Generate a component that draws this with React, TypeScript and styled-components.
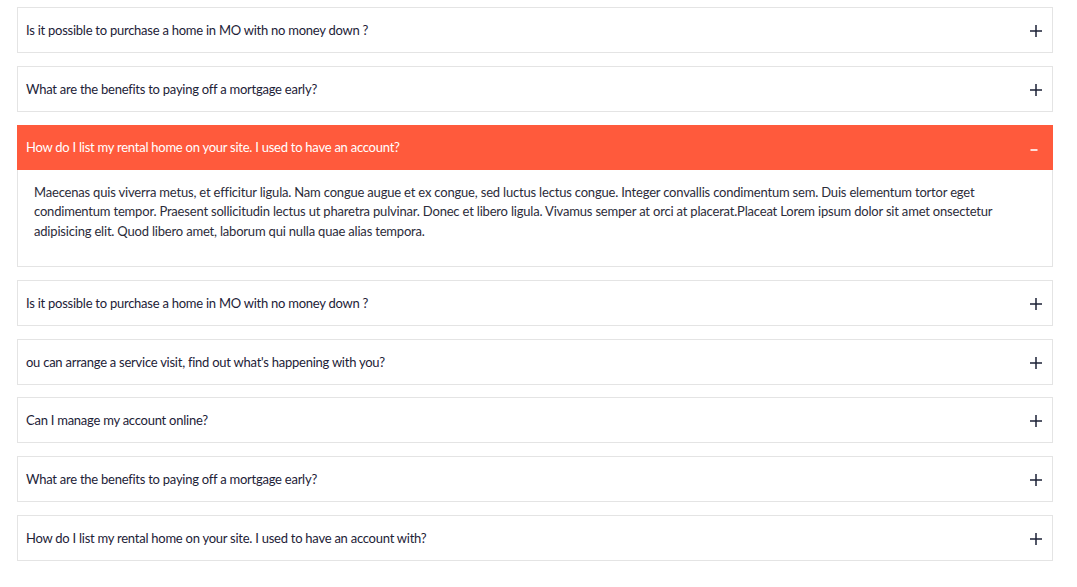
import React, { useState } from "react";
import styled, { createGlobalStyle } from "styled-components";

const Global = createGlobalStyle`
  html, body { margin: 0; padding: 0; background: #fff; }
  body { font-family: Lato, "Open Sans", sans-serif; }
`;

const Wrapper = styled.div`
  padding: 7px 24px 0 17px;
  display: flex;
  flex-direction: column;
  gap: 12.8px;
`;

const Item = styled.div`
  border: 1px solid #e4e4e4;
  background: #fff;
`;

const Header = styled.div<{ $open: boolean }>`
  height: ${(p) => (p.$open ? "45px" : "44px")};
  display: flex;
  align-items: center;
  justify-content: space-between;
  background: ${(p) => (p.$open ? "#ff5a3c" : "#fff")};
  color: ${(p) => (p.$open ? "#fff" : "#1d2237")};
  font-size: 13px;
  letter-spacing: -0.25px;
  cursor: pointer;
  margin: ${(p) => (p.$open ? "-1px -1px 0" : "0")};
  padding-left: ${(p) => (p.$open ? "9px" : "8px")};
  padding-right: ${(p) => (p.$open ? "10px" : "9px")};
`;

const Body = styled.div`
  padding: 13px 16px 25px 16px;
  font-size: 13px;
  line-height: 19.5px;
  letter-spacing: -0.19px;
  color: #2c2c3a;
`;

const IconBox = styled.span`
  display: flex;
  width: 14px;
  height: 14px;
  margin-top: 2px;
`;

const PlusIcon = () => (
  <IconBox>
    <svg width="14" height="14" viewBox="0 0 14 14">
      <path d="M7 1v12M1 7h12" stroke="#1d2237" strokeWidth="1.5" fill="none" />
    </svg>
  </IconBox>
);

const MinusIcon = () => (
  <IconBox>
    <svg width="14" height="14" viewBox="0 0 14 14">
      <path d="M1.5 9h7" stroke="#fff" strokeWidth="1.6" fill="none" />
    </svg>
  </IconBox>
);

const items = [
  "Is it possible to purchase a home in MO with no money down ?",
  "What are the benefits to paying off a mortgage early?",
  "How do I list my rental home on your site. I used to have an account?",
  "Is it possible to purchase a home in MO with no money down ?",
  "ou can arrange a service visit, find out what's happening with you?",
  "Can I manage my account online?",
  "What are the benefits to paying off a mortgage early?",
  "How do I list my rental home on your site. I used to have an account with?",
];

const bodyText =
  "Maecenas quis viverra metus, et efficitur ligula. Nam congue augue et ex congue, sed luctus lectus congue. Integer convallis condimentum sem. Duis elementum tortor eget condimentum tempor. Praesent sollicitudin lectus ut pharetra pulvinar. Donec et libero ligula. Vivamus semper at orci at placerat.Placeat Lorem ipsum dolor sit amet onsectetur adipisicing elit. Quod libero amet, laborum qui nulla quae alias tempora.";

export default function App() {
  const [open, setOpen] = useState<number>(2);
  return (
    <>
      <Global />
      <Wrapper>
        {items.map((q, i) => (
          <Item key={i}>
            <Header $open={open === i} onClick={() => setOpen(open === i ? -1 : i)}>
              <span>{q}</span>
              {open === i ? <MinusIcon /> : <PlusIcon />}
            </Header>
            {open === i && <Body>{bodyText}</Body>}
          </Item>
        ))}
      </Wrapper>
    </>
  );
}
